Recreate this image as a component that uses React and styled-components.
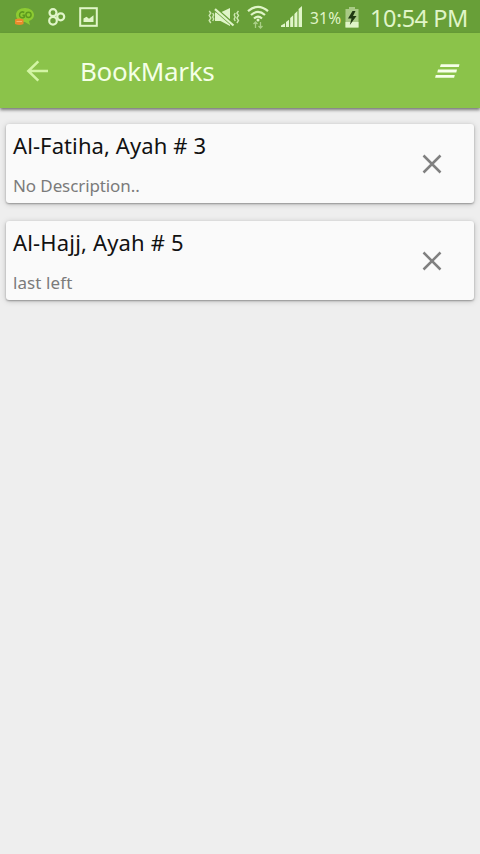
import styled, { createGlobalStyle } from "styled-components";

const GlobalStyle = createGlobalStyle`
  * {
    box-sizing: border-box;
  }

  body {
    margin: 0;
    background-color: #eeeeee;
    font-family: "Noto Sans", "Open Sans", sans-serif;
  }
`;

const Screen = styled.div`
  display: flex;
  flex-direction: column;
  min-height: 100vh;
  background-color: #eeeeee;
`;

const StatusBar = styled.div`
  display: flex;
  align-items: center;
  height: 33px;
  padding: 0 12px 0 14px;
  background-color: #689f38;
  color: #e0f5c8;

  & svg {
    display: block;
    flex: none;
  }
`;

const Notifications = styled.div`
  display: flex;
  align-items: center;
  gap: 13px;
  margin-right: auto;
`;

const Indicators = styled.div`
  display: flex;
  align-items: center;
`;

const SignalGroup = styled.div`
  display: flex;
  align-items: center;

  & svg:nth-child(2) {
    margin: 0 12px 0 7px;
  }
`;

const Battery = styled.span`
  width: 35px;
  margin-left: 8px;
  font-size: 15.5px;
  line-height: 32px;
  letter-spacing: 0.2px;
  white-space: nowrap;
  padding-top: 2px;
`;

const Clock = styled.span`
  width: 98px;
  margin-left: 11px;
  font-size: 23.5px;
  line-height: 32px;
  letter-spacing: -0.5px;
  white-space: nowrap;
  padding-top: 2px;
`;

const AppBar = styled.header`
  display: flex;
  align-items: center;
  height: 75px;
  padding: 0 20px 0 26px;
  background-color: #8bc34a;
  box-shadow: 0 2px 3px rgba(0, 0, 0, 0.5);
`;

const Title = styled.h1`
  flex: 1;
  margin: 0 0 0 30px;
  font-size: 26px;
  font-weight: 400;
  line-height: 36px;
  letter-spacing: -0.35px;
  color: #f4ffe6;
`;

const IconButton = styled.button`
  display: flex;
  padding: 0;
  border: none;
  background: none;
  color: ${(props) => props.$color};
`;

const List = styled.ul`
  display: flex;
  flex-direction: column;
  gap: 18px;
  margin: 0;
  padding: 16px 6px;
  list-style: none;
`;

const Card = styled.li`
  display: flex;
  align-items: center;
  height: 79px;
  padding: 0 32px 0 7px;
  border-radius: 3px;
  background-color: #fafafa;
  box-shadow: 0 1px 2px rgba(0, 0, 0, 0.32), 0 1px 6px rgba(0, 0, 0, 0.18);
`;

const CardText = styled.div`
  display: flex;
  flex: 1;
  flex-direction: column;
  gap: 7px;
  padding-top: 4px;
`;

const Verse = styled.div`
  font-size: 22px;
  line-height: 34px;
  letter-spacing: ${(props) => props.$spacing};
  color: #111111;
`;

const Note = styled.div`
  font-size: 17px;
  line-height: 34px;
  letter-spacing: ${(props) => props.$spacing};
  color: #7b7b7b;
`;

const bookmarks = [
  {
    id: 1,
    verse: "Al-Fatiha, Ayah # 3",
    note: "No Description..",
    verseSpacing: "0.1px",
    noteSpacing: "-0.1px",
  },
  {
    id: 2,
    verse: "Al-Hajj, Ayah # 5",
    note: "last left",
    verseSpacing: "0.17px",
    noteSpacing: "0.1px",
  },
];

const GoSmsIcon = () => (
  <svg width="21" height="20" viewBox="0 0 21 20">
    <path d="M11 1C5.500 1 2 4 2 8c0 4 3.500 7 9 7l5 3-1-4c3-1 5-3 5-6 0-4-4-7-9-7z" fill="#8dcb32" />
    <path
      d="M10.300 5.500C8 4 5.500 5.500 5.500 8s2.500 3.500 4.800 2V8.200H8.500"
      fill="none"
      stroke="#5d9a1e"
      strokeWidth="1.500"
    />
    <circle cx="14.500" cy="7.800" r="2.600" fill="none" stroke="#5d9a1e" strokeWidth="1.500" />
    <path d="M1 12.500q4-2 8.500 0v4.500q-4 2-8.500 0z" fill="#e98a2c" />
    <path d="M2.500 14.500h5.500" stroke="#f6b468" strokeWidth="1" />
  </svg>
);

const CirclesIcon = () => (
  <svg width="18" height="20" viewBox="0 0 18 20">
    <g fill="none" stroke="currentColor" strokeWidth="2.200">
      <circle cx="5" cy="5.700" r="3.500" />
      <circle cx="5" cy="13.800" r="3.800" />
      <circle cx="12.700" cy="9.800" r="3.500" />
    </g>
  </svg>
);

const PictureIcon = () => (
  <svg width="19" height="20" viewBox="0 0 19 20">
    <rect x="1.200" y="1.200" width="16.600" height="17.600" fill="none" stroke="currentColor" strokeWidth="2" />
    <path d="M4.500 15v-3.500l3-1.800 2.500 2 4.500-3.400V15z" fill="currentColor" />
  </svg>
);

const VibrateMuteIcon = () => (
  <svg width="32" height="22" viewBox="0 0 32 22">
    <path d="M7 6.500h5.500L22 2v18l-9.500-5H7z" fill="currentColor" />
    <path d="M6 2l20 17.500" stroke="#689f38" strokeWidth="4.200" />
    <path d="M7 3.200l18.500 16.300" stroke="currentColor" strokeWidth="2.200" />
    <g fill="none" stroke="currentColor" strokeWidth="1.400" opacity="0.850">
      <path d="M1.200 5l1.600 2-1.600 2.500 1.600 2.500-1.600 2.500 1.600 2.500M4.700 7l1 2-1 2 1 2-1 2" />
      <path d="M30.500 5l-1.600 2 1.600 2.500-1.600 2.500 1.600 2.500-1.600 2.500M27.200 7l-1 2 1 2-1 2 1 2" />
    </g>
  </svg>
);

const WifiIcon = () => (
  <svg width="22" height="24" viewBox="0 0 22 24">
    <g fill="none" stroke="currentColor" strokeWidth="2.200">
      <path d="M1 6.200Q11-2.500 21 6.200" />
      <path d="M4 10Q11 3.800 18 10" />
      <path d="M7 13.500Q11 9.800 15 13.500" />
    </g>
    <circle cx="11" cy="15" r="1.500" fill="currentColor" />
    <path
      d="M8.500 23v-6M6.500 19l2-2 2 2M13.500 17v6M11.500 21l2 2 2-2"
      fill="none"
      stroke="currentColor"
      strokeWidth="1.300"
      opacity="0.550"
    />
  </svg>
);

const SignalIcon = () => (
  <svg width="21" height="21" viewBox="0 0 21 21">
    <path
      d="M0 21v-1.500l4-2.300V21zM5 21v-5l3-2.300V21zM9.200 21v-9l3-2.800V21zM13.400 21V8l3-3v16zM17.600 21V3L21 0v21z"
      fill="currentColor"
    />
  </svg>
);

const BatteryIcon = () => (
  <svg width="14" height="22" viewBox="0 0 14 22">
    <path d="M4 1h6v2h3.500v18.500H.5V3H4z" fill="#a9cb86" />
    <path d="M.5 16h13v5.500H.5z" fill="currentColor" />
    <path d="M7.500 5L3 12.500h3.500L4.800 19 11.500 10H8l2.500-5z" fill="#203812" />
  </svg>
);

const BackIcon = () => (
  <svg width="24" height="24" viewBox="0 0 24 24">
    <path d="M22 12H2.500M12.300 2.300L2.300 12l10 9.700" fill="none" stroke="currentColor" strokeWidth="2.500" />
  </svg>
);

const ClearAllIcon = () => (
  <svg width="26" height="16" viewBox="0 0 26 16">
    <path d="M6.800 1.300h18.700l-.7 2.800H6zM4 6.600h19l-.7 2.800H3.300zM1.800 12h19l-.7 2.800H1.100z" fill="currentColor" />
  </svg>
);

const CloseIcon = () => (
  <svg width="20" height="20" viewBox="0 0 20 20">
    <path d="M1.500 1.500l17 17M18.500 1.500l-17 17" stroke="currentColor" strokeWidth="2.500" />
  </svg>
);

const BookmarkCard = ({ bookmark }) => {
  const { verse, note, verseSpacing, noteSpacing } = bookmark;

  return (
    <Card>
      <CardText>
        <Verse $spacing={verseSpacing}>{verse}</Verse>
        <Note $spacing={noteSpacing}>{note}</Note>
      </CardText>
      <IconButton $color="#808080" aria-label="Delete">
        <CloseIcon />
      </IconButton>
    </Card>
  );
};

const App = () => {
  return (
    <>
      <GlobalStyle />
      <Screen>
        <StatusBar>
          <Notifications>
            <GoSmsIcon />
            <CirclesIcon />
            <PictureIcon />
          </Notifications>
          <Indicators>
            <SignalGroup>
              <VibrateMuteIcon />
              <WifiIcon />
              <SignalIcon />
            </SignalGroup>
            <Battery>31%</Battery>
            <BatteryIcon />
            <Clock>10:54 PM</Clock>
          </Indicators>
        </StatusBar>

        <AppBar>
          <IconButton $color="#d3f5a4" aria-label="Back">
            <BackIcon />
          </IconButton>
          <Title>BookMarks</Title>
          <IconButton $color="#f6ffe9" aria-label="Clear all">
            <ClearAllIcon />
          </IconButton>
        </AppBar>

        <List>
          {bookmarks.map((bookmark) => (
            <BookmarkCard bookmark={bookmark} key={bookmark.id} />
          ))}
        </List>
      </Screen>
    </>
  );
};

export default App;
